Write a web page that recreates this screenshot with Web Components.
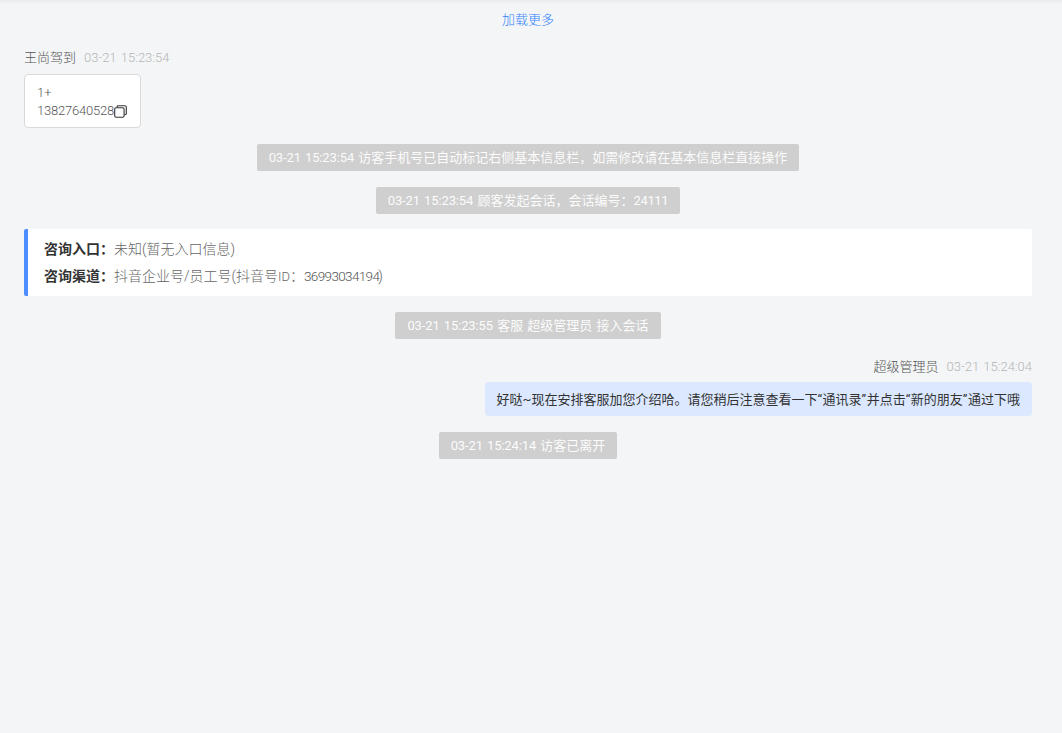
<!DOCTYPE html>
<html><head><meta charset="utf-8">
<style>
html,body{margin:0;padding:0;height:100%;background:#f4f5f7;}
body{font-family:Roboto,"Noto Sans CJK SC",sans-serif;font-weight:300;font-size:13px;overflow:hidden;}
.d{letter-spacing:-.35px}
.q{letter-spacing:.5px}
</style></head><body>
<chat-view>
  <load-more>加载更多</load-more>
  <msg-head name="王尚驾到" time="03-21 15:23:54" style="margin-top:20px"></msg-head>
  <phone-card></phone-card>
  <sys-note time="03-21 15:23:54" style="margin-top:16px">访客手机号已自动标记右侧基本信息栏，如需修改请在基本信息栏直接操作</sys-note>
  <sys-note time="03-21 15:23:54" style="margin-top:16px">顾客发起会话，会话编号：<span class="d">24111</span></sys-note>
  <info-card style="margin-top:15px"></info-card>
  <sys-note time="03-21 15:23:55" style="margin-top:16px">客服 超级管理员 接入会话</sys-note>
  <msg-head name="超级管理员" time="03-21 15:24:04" right style="margin-top:19px"></msg-head>
  <agent-bubble>好哒~现在安排客服加您介绍哈。请您稍后注意查看一下<span class="q">“</span>通讯录<span class="q">”</span>并点击<span class="q">“</span>新的朋友<span class="q">”</span>通过下哦</agent-bubble>
  <sys-note time="03-21 15:24:14" style="margin-top:16px">访客已离开</sys-note>
</chat-view>
<script>
function def(name,html,init){
  customElements.define(name,class extends HTMLElement{
    connectedCallback(){
      const r=this.attachShadow({mode:'open'});
      r.innerHTML=html;
      if(init)init(this,r);
    }
  });
}
def('chat-view',`<style>:host{display:flex;flex-direction:column;height:733px;box-sizing:border-box;padding:0 30px 0 24px;position:relative;color:#333}
.shadow{position:absolute;left:0;right:0;top:0;height:4px;background:linear-gradient(#e9eaec,#f4f5f7)}</style><div class="shadow"></div><slot></slot>`);
def('load-more',`<style>:host{display:block;text-align:center;color:#2f83fb;line-height:18px;margin-top:11px}</style><slot></slot>`);
def('msg-head',`<style>:host{display:flex;gap:8px;line-height:18px;color:#555}:host([right]){justify-content:flex-end}
.t{color:#b5b5b5;word-spacing:1px}</style><span class="n"></span><span class="t"></span>`,(h,r)=>{
  r.querySelector('.n').textContent=h.getAttribute('name');
  r.querySelector('.t').textContent=h.getAttribute('time');
});
def('phone-card',`<style>:host{display:block;align-self:flex-start;margin-top:7px;width:117px;height:54px;box-sizing:border-box;background:#fff;border:1px solid #d9d9d9;border-radius:4px;padding:9px 12px;color:#555;line-height:18px}
.r{display:flex;align-items:center}
.n{letter-spacing:-.2px}
svg{display:block;flex:none}</style><div>1+</div><div class="r"><span class="n">13827640528</span><svg width="13" height="13" viewBox="0 0 13 13" fill="none" stroke="#333" stroke-width="1.1"><path d="M3.1 2.6V1.9Q3.1 .7 4.3 .7H11Q12.3 .7 12.3 1.9V8.6Q12.3 9.8 11 9.8H10.3"/><rect x=".7" y="2.8" width="9.4" height="9.4" rx="1.4"/></svg></div>`);
def('sys-note',`<style>:host{display:block;align-self:center;background:#cfcfcf;color:rgba(255,255,255,.94);font-weight:400;border-radius:2px;padding:1px 12px 0;line-height:26px;white-space:nowrap;word-spacing:1px}
.t{letter-spacing:-.12px}</style><span class="t"></span> <slot></slot>`,(h,r)=>{
  r.querySelector('.t').textContent=h.getAttribute('time');
});
def('info-card',`<style>:host{display:block;background:#fff;border-left:4px solid #4d8dff;border-radius:2px;padding:7px 16px 6px;color:#666;line-height:27px;font-size:14px}
b{color:#333;font-weight:700}
.i{font-size:13px}
.d{font-size:13.5px;letter-spacing:-.65px;color:#555;margin-right:-1px}</style><div><b>咨询入口：</b>未知(暂无入口信息)</div><div><b>咨询渠道：</b>抖音企业号/员工号(抖音号<span class="i">ID</span>：<span class="d">36993034194</span>)</div>`);
def('agent-bubble',`<style>:host{display:block;align-self:flex-end;margin-top:6px;background:#dbe8ff;color:#333;font-weight:400;border-radius:4px;padding:9px 12px 7px;line-height:18px}</style><slot></slot>`);
</script>
</body></html>
